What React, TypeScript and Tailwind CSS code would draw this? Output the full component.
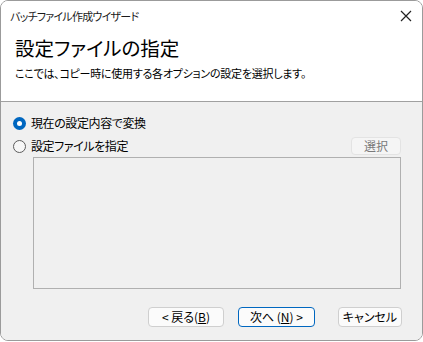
import React from "react";

const font = "font-['Yu_Gothic_UI','Noto_Sans_CJK_JP',sans-serif] [font-feature-settings:'palt']";

function Radio({ checked }: { checked: boolean }) {
  return checked ? (
    <span className="w-[13px] h-[13px] rounded-full bg-[#0067c0] flex items-center justify-center shrink-0">
      <span className="w-[5px] h-[5px] rounded-full bg-white" />
    </span>
  ) : (
    <span className="w-[13px] h-[13px] rounded-full border border-[#5c5c5c] bg-[#f7f7f7] shrink-0" />
  );
}

export default function App() {
  return (
    <div className={`w-[423px] h-[342px] bg-white ${font} text-black`}>
      <div className="w-[423px] h-[341px] rounded-[8px] border border-[#9b9b9b] overflow-hidden flex flex-col">
        <div className="bg-white h-[101px] border-b border-[#a0a0a0] flex flex-col">
          <div className="h-[29px] flex items-center pl-[9px] pr-[10px]">
            <span className="text-[11px] leading-[14px] tracking-[-0.75px] text-[#1a1a1a]">バッチファイル作成ウイザード</span>
            <svg className="ml-auto" width="12" height="12" viewBox="0 0 12 12">
              <path d="M1 1 L11 11 M11 1 L1 11" stroke="#222" strokeWidth="1.2" fill="none" />
            </svg>
          </div>
          <div className="pl-[14px] pt-[6px] text-[19.5px] leading-[24px]">設定ファイルの指定</div>
          <div className="pl-[14px] pt-[6px] text-[11px] leading-[14px] tracking-[-0.25px]">ここでは、コピー時に使用する各オプションの設定を選択します。</div>
        </div>
        <div className="flex-1 bg-[#f0f0f0] flex flex-col pt-[11px] pl-[12px] pr-[20px]">
          <div className="h-[20px] flex items-center gap-[5px]">
            <Radio checked />
            <span className="text-[12px] leading-[14px] tracking-[-0.4px]">現在の設定内容で変換</span>
          </div>
          <div className="h-[22px] mt-[2px] flex items-center gap-[5px]">
            <Radio checked={false} />
            <span className="text-[12px] leading-[14px] tracking-[-0.4px]">設定ファイルを指定</span>
            <button className="ml-auto mr-[1px] w-[50px] h-[18px] rounded-[4px] border border-[#e3e3e3] bg-[#f5f5f5] text-[12px] leading-[14px] text-[#7a7a7a] flex items-center justify-center">選択</button>
          </div>
          <div className="ml-[20px] w-[368px] h-[132px] border border-[#b0b0b0] bg-[#f0f0f0]" />
          <div className="mt-[18px] flex items-center">
            <button className="ml-[135px] w-[77px] h-[20px] rounded-[4px] border border-[#cfcfcf] bg-[#fbfbfb] text-[12px] leading-[14px] flex items-center justify-center">
              &lt; 戻る(<span className="underline">B</span>)
            </button>
            <button className="ml-[14px] w-[78px] h-[20px] rounded-[4px] border border-[#0067c0] bg-[#fbfbfb] text-[12px] leading-[14px] flex items-center justify-center">
              次へ (<span className="underline">N</span>) &gt;
            </button>
            <button className="ml-[23px] w-[65px] h-[20px] rounded-[4px] border border-[#cfcfcf] bg-[#fbfbfb] text-[12px] leading-[14px] flex items-center justify-center">
              キャンセル
            </button>
          </div>
        </div>
      </div>
    </div>
  );
}
